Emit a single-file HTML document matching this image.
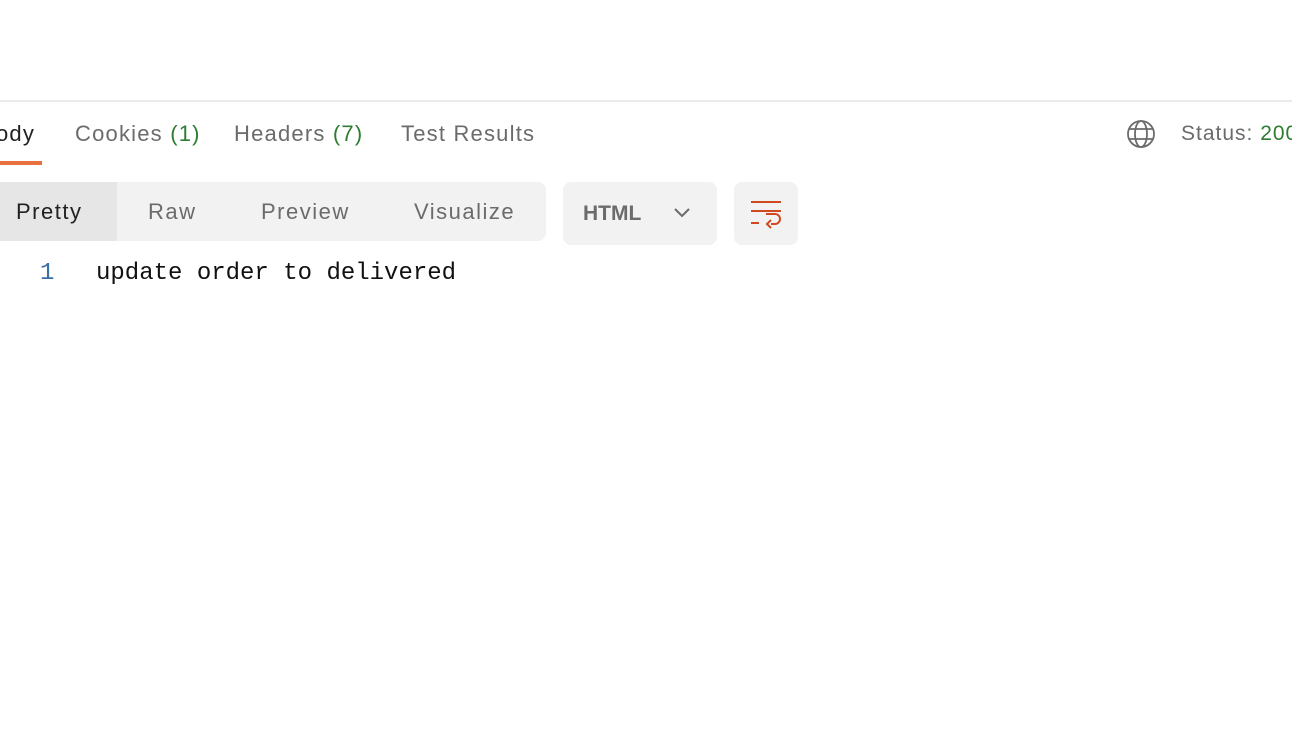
<html><head><style>
body{margin:0;width:1292px;height:752px;background:#fff;position:relative;overflow:hidden;font-family:"Liberation Sans",sans-serif}
.a{position:absolute;white-space:nowrap}
.t{font-size:22px;color:#6b6b6b;top:121px;letter-spacing:1.2px}
.g{color:#2e7d32}
.s{font-size:22px;letter-spacing:1.5px;top:199px}
</style></head><body>
<div class="a" style="left:0;top:100px;width:1292px;height:2px;background:#ebebeb"></div>
<div class="a t" style="left:-4px;color:#212121">ody</div>
<div class="a t" style="left:75px">Cookies <span class="g">(1)</span></div>
<div class="a t" style="left:234px">Headers <span class="g">(7)</span></div>
<div class="a t" style="left:401px">Test Results</div>
<div class="a" style="left:0;top:161px;width:42px;height:4px;background:#e8703f"></div>
<svg class="a" style="left:1126px;top:119px" width="30" height="30" viewBox="0 0 30 30" fill="none" stroke="#6b6b6b" stroke-width="1.8"><circle cx="15" cy="15" r="13"/><ellipse cx="15" cy="15" rx="6" ry="13"/><path d="M3 10h24M3 20h24"/></svg>
<div class="a" style="left:1181px;top:122px;font-size:21px;color:#6b6b6b;letter-spacing:1px">Status: <span class="g">200 OK</span></div>
<div class="a" style="left:-10px;top:182px;width:556px;height:59px;background:#f2f2f2;border-radius:8px"></div>
<div class="a" style="left:0;top:182px;width:117px;height:59px;background:#e6e6e6"></div>
<div class="a s" style="left:16px;color:#212121">Pretty</div>
<div class="a s" style="left:148px;color:#6b6b6b">Raw</div>
<div class="a s" style="left:261px;color:#6b6b6b">Preview</div>
<div class="a s" style="left:414px;color:#6b6b6b">Visualize</div>
<div class="a" style="left:563px;top:182px;width:154px;height:63px;background:#f2f2f2;border-radius:8px"></div>
<div class="a" style="left:583px;top:202px;font-size:21px;font-weight:bold;color:#6b6b6b">HTML</div>
<svg class="a" style="left:672px;top:206px" width="20" height="14" viewBox="0 0 20 14" fill="none" stroke="#6b6b6b" stroke-width="2"><path d="M3 3l7 7 7-7"/></svg>
<div class="a" style="left:734px;top:182px;width:64px;height:63px;background:#f2f2f2;border-radius:8px"></div>
<svg class="a" style="left:750px;top:200px" width="32" height="30" viewBox="0 0 32 30" fill="none" stroke="#d14a1f" stroke-width="2"><path d="M1 2h30M1 11h30M1 23h8M21 24h4a5 5 0 0 0 0-10h-9M21 20l-4 4 4 4"/></svg>
<div class="a" style="left:40px;top:260px;font-family:'Liberation Mono',monospace;font-size:24px;color:#3a6ea5">1</div>
<div class="a" style="left:96px;top:260px;font-family:'Liberation Mono',monospace;font-size:24px;color:#111">update order to delivered</div>
</body></html>
